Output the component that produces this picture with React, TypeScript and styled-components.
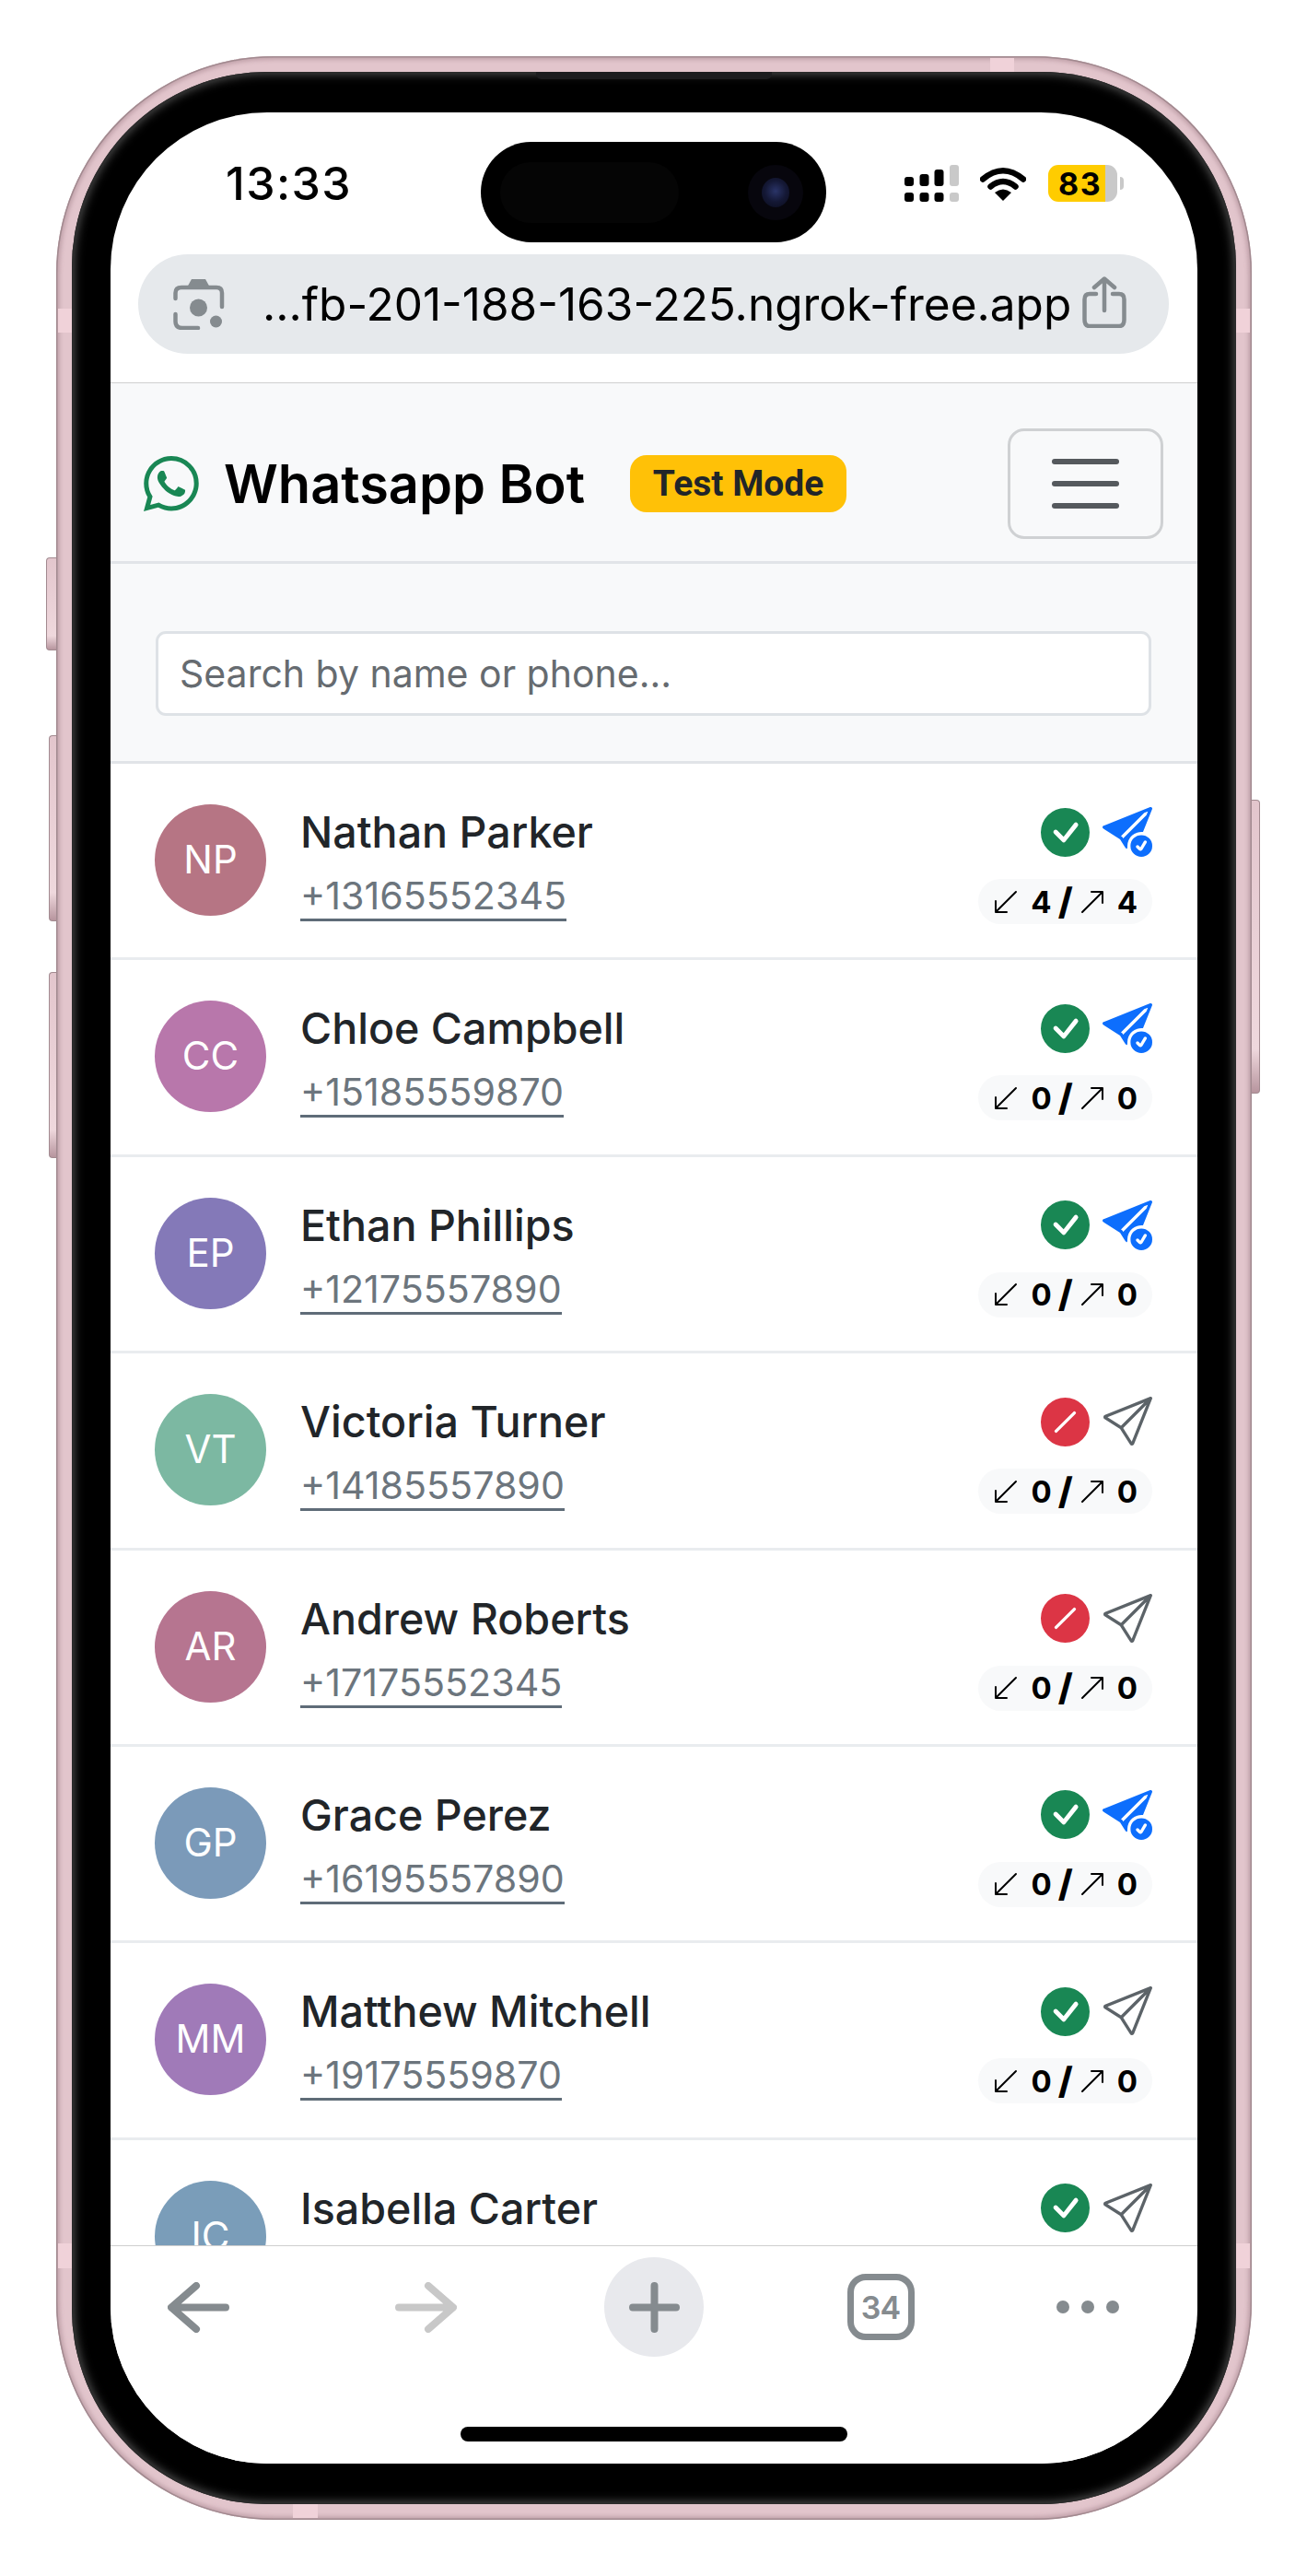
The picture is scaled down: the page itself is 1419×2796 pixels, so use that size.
import styled, { createGlobalStyle } from 'styled-components'
import {
  BsArrowDownLeft,
  BsArrowUpRight,
  BsCheckCircleFill,
  BsSend,
  BsSendCheckFill,
  BsSlashCircleFill,
  BsWhatsapp,
} from 'react-icons/bs'

const GlobalStyle = createGlobalStyle`
  html, body {
    margin: 0;
    background: #fff;
    overflow: hidden;
  }
  * {
    box-sizing: border-box;
  }
`

const Page = styled.div`
  width: 1419px;
  height: 2796px;
  padding: 61px 0 0 61px;
  font-family: Inter, 'Liberation Sans', sans-serif;
`

const Frame = styled.div`
  position: relative;
  width: 1298px;
  height: 2674px;
  padding: 17px;
  border-radius: 236px;
  background: #e2c5cc;
  box-shadow:
    inset 0 0 0 1.5px #a28a90,
    inset 0 0 4px 4px rgba(170, 136, 146, 0.55);
`

const Bezel = styled.div`
  width: 1264px;
  height: 2640px;
  padding: 44px 42px;
  border-radius: 212px;
  background: #000;
  box-shadow:
    inset 0 0 0 1.5px #2b2b2b,
    inset 0 0 11px 2px rgba(110, 110, 110, 0.8);
`

const Screen = styled.div`
  position: relative;
  display: flex;
  flex-direction: column;
  width: 1180px;
  height: 2552px;
  overflow: hidden;
  border-radius: 170px;
  background: #fff;
`

const SideButton = styled.div<{ $right?: boolean; $top: number; $height: number; $width: number }>`
  position: absolute;
  top: ${({ $top }) => $top}px;
  ${({ $right, $width }) => ($right ? 'right' : 'left')}: -${({ $width }) => $width}px;
  width: ${({ $width }) => $width}px;
  height: ${({ $height }) => $height}px;
  border: 1px solid #a28a90;
  border-${({ $right }) => ($right ? 'left' : 'right')}: none;
  border-radius: ${({ $right }) => ($right ? '0 4px 4px 0' : '4px 0 0 4px')};
  background: linear-gradient(180deg, #e3c6cd 0%, #efd8dd 85%, #b7959e 100%);
`

const AntennaBand = styled.div<{ $x: number; $y: number; $w: number; $h: number }>`
  position: absolute;
  left: ${({ $x }) => $x}px;
  top: ${({ $y }) => $y}px;
  width: ${({ $w }) => $w}px;
  height: ${({ $h }) => $h}px;
  background: #f0d2d9;
`

const SpeakerSlit = styled.div`
  position: absolute;
  top: 17px;
  left: 521px;
  width: 256px;
  height: 8px;
  border-radius: 0 0 6px 6px;
  background: #1d1d1f;
`

const Island = styled.div`
  position: absolute;
  top: 32px;
  left: 402px;
  display: flex;
  align-items: center;
  justify-content: space-between;
  width: 375px;
  height: 109px;
  padding: 0 25px 0 21px;
  border-radius: 55px;
  background: #000;
`

const Sensor = styled.div`
  width: 194px;
  height: 66px;
  border-radius: 33px;
  background: #050505;
`

const Camera = styled.div`
  display: flex;
  align-items: center;
  justify-content: center;
  width: 60px;
  height: 60px;
  border-radius: 50%;
  background: #07060d;
`

const Lens = styled.div`
  width: 30px;
  height: 32px;
  border-radius: 50%;
  background: radial-gradient(circle at 50% 45%, #2a3468 0%, #141835 50%, #0a0b1a 100%);
`

const StatusBar = styled.div`
  display: flex;
  flex: 0 0 154px;
  align-items: center;
  padding: 0 87px 0 125px;
`

const Time = styled.div`
  font-size: 50px;
  font-weight: 500;
  letter-spacing: 1.4px;
  color: #000;
`

const StatusIcons = styled.div`
  display: flex;
  align-items: center;
  margin-left: auto;
`

const Battery = styled.div`
  position: relative;
  display: flex;
  align-items: center;
  width: 75px;
  height: 40px;
  margin-left: 24px;
  padding-left: 11px;
  border-radius: 11px;
  background: linear-gradient(90deg, #ffcc00 0 62px, #c9c9c9 62px);
  font-size: 34px;
  font-weight: 700;
  letter-spacing: 1.5px;
  color: #000;
`

const BatteryNub = styled.div`
  position: absolute;
  top: 13px;
  right: -7px;
  width: 4px;
  height: 14px;
  border-radius: 0 4px 4px 0;
  background: #c9c9c9;
`

const AddressRow = styled.div`
  flex: 0 0 139px;
  padding: 0 31px 31px 30px;
`

const AddressBar = styled.div`
  display: flex;
  align-items: center;
  height: 108px;
  padding: 0 46px 0 38px;
  border-radius: 54px;
  background: #e6e9ec;
`

const AddressText = styled.div`
  margin-left: 41px;
  font-size: 49.5px;
  white-space: nowrap;
  color: #000;
`

const ShareSlot = styled.div`
  margin-left: auto;
`

const Navbar = styled.div`
  display: flex;
  flex: 0 0 197px;
  align-items: center;
  padding: 24px 37px 0 36px;
  border-top: 1px solid #cfcfcf;
  border-bottom: 3px solid #e1e4e8;
  background: #f8f9fa;
`

const Logo = styled(BsWhatsapp)`
  width: 60px;
  height: 60px;
  color: #198754;
`

const Brand = styled.div`
  margin-left: 27px;
  font-size: 57.7px;
  font-weight: 600;
  white-space: nowrap;
  color: #000;
`

const TestBadge = styled.div`
  display: flex;
  align-items: center;
  justify-content: center;
  width: 235px;
  height: 62px;
  margin-left: 49px;
  border-radius: 18px;
  background: #ffc107;
  font-family: Roboto, Inter, sans-serif;
  font-size: 39px;
  font-weight: 700;
  color: #212529;
`

const Toggler = styled.div`
  display: flex;
  flex-direction: column;
  align-items: center;
  justify-content: center;
  gap: 18px;
  width: 169px;
  height: 120px;
  margin-left: auto;
  border: 3px solid #cfd1d3;
  border-radius: 18px;
`

const TogglerLine = styled.div`
  width: 73px;
  height: 6px;
  border-radius: 3px;
  background: #55595d;
`

const SearchSection = styled.div`
  flex: 0 0 217px;
  padding: 73px 50px 0 49px;
  border-bottom: 3px solid #e1e4e8;
  background: #f8f9fa;
`

const SearchInput = styled.div`
  display: flex;
  align-items: center;
  height: 92px;
  padding-left: 23px;
  border: 3px solid #dee2e6;
  border-radius: 11px;
  background: #fff;
  font-size: 41px;
  color: #666b70;
`

const ContactList = styled.div`
  flex: 1;
  overflow: hidden;
`

const Row = styled.div`
  display: flex;
  height: 213.4px;
  padding: 44px 49px 0 48px;
  border-bottom: 3px solid #e9ecef;
`

const Avatar = styled.div<{ $color: string }>`
  display: flex;
  flex: 0 0 121px;
  align-items: center;
  justify-content: center;
  height: 121px;
  padding-bottom: 2px;
  border-radius: 50%;
  background: ${({ $color }) => $color};
  font-size: 42px;
  color: #fff;
`

const Info = styled.div`
  display: flex;
  flex-direction: column;
  align-items: flex-start;
  margin-left: 37px;
`

const Name = styled.div`
  margin-top: 2px;
  font-size: 46.6px;
  font-weight: 500;
  line-height: 56px;
  color: #212529;
`

const Phone = styled.div`
  margin-top: 16px;
  border-bottom: 3px solid #5f6c78;
  font-size: 41.2px;
  line-height: 50px;
  color: #6c757d;
`

const Meta = styled.div`
  display: flex;
  flex-direction: column;
  align-items: flex-end;
  margin-left: auto;
`

const MetaIcons = styled.div`
  display: flex;
  align-items: center;
  gap: 14px;
  height: 54px;
  margin-top: 3px;
`

const OkIcon = styled(BsCheckCircleFill)`
  width: 53px;
  height: 53px;
  color: #198754;
`

const BlockedIcon = styled(BsSlashCircleFill)`
  width: 53px;
  height: 53px;
  color: #dc3545;
`

const SentIcon = styled(BsSendCheckFill)`
  width: 54px;
  height: 54px;
  color: #0d6efd;
`

const IdleIcon = styled(BsSend)`
  width: 54px;
  height: 54px;
  color: #5c6368;
`

const Counter = styled.div`
  display: flex;
  align-items: center;
  height: 49px;
  margin-top: 24px;
  padding: 0 16px 0 14px;
  border-radius: 25px;
  background: #f8f9fa;
  font-size: 33px;
  font-weight: 700;
  color: #000;
`

const CounterArrow = styled.span`
  display: flex;
  margin-right: 11px;
  font-size: 32px;
`

const CounterSlash = styled.span`
  margin: 0 5px 0 7px;
  font-size: 40px;
  font-weight: 800;
  line-height: 1;
`

const Toolbar = styled.div`
  display: flex;
  flex: 0 0 237px;
  flex-direction: column;
  align-items: center;
  border-top: 1px solid #cfcfcf;
  background: #fff;
`

const ToolbarItems = styled.div`
  display: grid;
  grid-template-columns: 190px 304px 192px 300px 150px;
  flex: 0 0 132px;
  align-items: center;
  justify-items: center;
  width: 100%;
`

const PlusButton = styled.div`
  display: flex;
  align-items: center;
  justify-content: center;
  width: 108px;
  height: 108px;
  border-radius: 50%;
  background: #e8e9ed;
`

const TabCount = styled.div`
  display: flex;
  align-items: center;
  justify-content: center;
  width: 73px;
  height: 72px;
  border: 7px solid #858b8f;
  border-radius: 20px;
  font-size: 34px;
  font-weight: 600;
  letter-spacing: -1px;
  color: #858b8f;
`

const Dots = styled.div`
  display: flex;
  gap: 13px;
`

const Dot = styled.div`
  width: 14px;
  height: 14px;
  border-radius: 50%;
  background: #858b8f;
`

const HomeBar = styled.div`
  width: 420px;
  height: 16px;
  margin-top: 64px;
  border-radius: 8px;
  background: #000;
`

const SignalIcon = () => (
  <svg width="59" height="40" viewBox="0 0 59 40">
    <rect x="0" y="13" width="10" height="10" rx="3" />
    <rect x="16.5" y="10" width="10" height="13" rx="3" />
    <rect x="32.5" y="5" width="10" height="18" rx="3" />
    <rect x="49" y="0" width="10" height="23" rx="3" fill="#c9c9c9" />
    <rect x="0" y="30" width="10" height="10" rx="3" />
    <rect x="16.5" y="30" width="10" height="10" rx="3" />
    <rect x="32.5" y="30" width="10" height="10" rx="3" />
    <rect x="49" y="30" width="10" height="10" rx="3" fill="#c9c9c9" />
  </svg>
)

const WifiIcon = () => (
  <svg width="50" height="37" viewBox="0 0 50 37" style={{ marginLeft: 23 }}>
    <path d="M3 13.5Q25 -5 47 13.5M11.5 21.5Q25 10.5 38.5 21.5" fill="none" stroke="#000" strokeWidth="6.5" strokeLinecap="round" />
    <path d="M16 28Q25 21 34 28L25 37Z" />
  </svg>
)

const LensIcon = () => (
  <svg width="56" height="55" viewBox="0 0 56 55" fill="none" stroke="#858b8f" strokeWidth="4.5" strokeLinecap="round">
    <path d="M2.5 21V15Q2.5 9 9 9H47Q53 9 53 15V30" />
    <path d="M2.5 38V46Q2.5 53 10 53H27" />
    <path d="M15 9 20 0H35L40 9Z" fill="#858b8f" stroke="none" />
    <circle cx="27.5" cy="31" r="9.5" fill="#858b8f" stroke="none" />
    <circle cx="46.5" cy="46" r="6.5" fill="#858b8f" stroke="none" />
  </svg>
)

const ShareIcon = () => (
  <svg width="48" height="56" viewBox="0 0 48 56" fill="none" stroke="#858b8f" strokeWidth="4.5" strokeLinecap="round" strokeLinejoin="round">
    <path d="M15 19H8Q2.5 19 2.5 25V47Q2.5 54 8 54H40Q45.5 54 45.5 47V25Q45.5 19 40 19H33" />
    <path d="M24 37V3M13 12 24 2.5 35 12" />
  </svg>
)

const ArrowIcon = ({ forward }: { forward?: boolean }) => (
  <svg width="67" height="55" viewBox="0 0 67 55" fill="none" stroke={forward ? '#c8c8c8' : '#858b8f'} strokeWidth="8" strokeLinecap="round" strokeLinejoin="round">
    {forward ? <path d="M4 27.5H62M36 4 63 27.5 36 51" /> : <path d="M63 27.5H5M31 4 4 27.5 31 51" />}
  </svg>
)

const PlusIcon = () => (
  <svg width="55" height="55" viewBox="0 0 55 55" fill="none" stroke="#858b8f" strokeWidth="8" strokeLinecap="round">
    <path d="M27.5 4V51M4 27.5H51" />
  </svg>
)

interface Contact {
  initials: string
  name: string
  phone?: string
  color: string
  active: boolean
  sent: boolean
  received?: number
  replied?: number
}

const contacts: Contact[] = [
  { initials: 'NP', name: 'Nathan Parker', phone: '+13165552345', color: '#b67584', active: true, sent: true, received: 4, replied: 4 },
  { initials: 'CC', name: 'Chloe Campbell', phone: '+15185559870', color: '#b877ab', active: true, sent: true, received: 0, replied: 0 },
  { initials: 'EP', name: 'Ethan Phillips', phone: '+12175557890', color: '#8479b8', active: true, sent: true, received: 0, replied: 0 },
  { initials: 'VT', name: 'Victoria Turner', phone: '+14185557890', color: '#7cb8a2', active: false, sent: false, received: 0, replied: 0 },
  { initials: 'AR', name: 'Andrew Roberts', phone: '+17175552345', color: '#b67590', active: false, sent: false, received: 0, replied: 0 },
  { initials: 'GP', name: 'Grace Perez', phone: '+16195557890', color: '#7b9ab9', active: true, sent: true, received: 0, replied: 0 },
  { initials: 'MM', name: 'Matthew Mitchell', phone: '+19175559870', color: '#a07ab8', active: true, sent: false, received: 0, replied: 0 },
  { initials: 'IC', name: 'Isabella Carter', color: '#7a9db9', active: true, sent: false },
]

const ContactRow = ({ contact }: { contact: Contact }) => (
  <Row>
    <Avatar $color={contact.color}>{contact.initials}</Avatar>
    <Info>
      <Name>{contact.name}</Name>
      {contact.phone && <Phone>{contact.phone}</Phone>}
    </Info>
    <Meta>
      <MetaIcons>
        {contact.active ? <OkIcon /> : <BlockedIcon />}
        {contact.sent ? <SentIcon /> : <IdleIcon />}
      </MetaIcons>
      {contact.received !== undefined && (
        <Counter>
          <CounterArrow>
            <BsArrowDownLeft />
          </CounterArrow>
          {contact.received}
          <CounterSlash>/</CounterSlash>
          <CounterArrow>
            <BsArrowUpRight />
          </CounterArrow>
          {contact.replied}
        </Counter>
      )}
    </Meta>
  </Row>
)

export default function App() {
  return (
    <>
      <GlobalStyle />
      <Page>
        <Frame>
          <SideButton $top={544} $height={101} $width={11} />
          <SideButton $top={737} $height={202} $width={8} />
          <SideButton $top={994} $height={202} $width={8} />
          <SideButton $right $top={807} $height={319} $width={9} />
          <AntennaBand $x={1014} $y={2} $w={26} $h={15} />
          <AntennaBand $x={2} $y={274} $w={15} $h={26} />
          <AntennaBand $x={1281} $y={274} $w={15} $h={26} />
          <AntennaBand $x={257} $y={2657} $w={27} $h={15} />
          <AntennaBand $x={2} $y={2374} $w={15} $h={27} />
          <AntennaBand $x={1281} $y={2374} $w={15} $h={27} />
          <SpeakerSlit />
          <Bezel>
            <Screen>
              <Island>
                <Sensor />
                <Camera>
                  <Lens />
                </Camera>
              </Island>
              <StatusBar>
                <Time>13:33</Time>
                <StatusIcons>
                  <SignalIcon />
                  <WifiIcon />
                  <Battery>
                    83
                    <BatteryNub />
                  </Battery>
                </StatusIcons>
              </StatusBar>
              <AddressRow>
                <AddressBar>
                  <LensIcon />
                  <AddressText>...fb-201-188-163-225.ngrok-free.app</AddressText>
                  <ShareSlot>
                    <ShareIcon />
                  </ShareSlot>
                </AddressBar>
              </AddressRow>
              <Navbar>
                <Logo />
                <Brand>Whatsapp Bot</Brand>
                <TestBadge>Test Mode</TestBadge>
                <Toggler>
                  <TogglerLine />
                  <TogglerLine />
                  <TogglerLine />
                </Toggler>
              </Navbar>
              <SearchSection>
                <SearchInput>Search by name or phone...</SearchInput>
              </SearchSection>
              <ContactList>
                {contacts.map((contact) => (
                  <ContactRow key={contact.initials} contact={contact} />
                ))}
              </ContactList>
              <Toolbar>
                <ToolbarItems>
                  <ArrowIcon />
                  <ArrowIcon forward />
                  <PlusButton>
                    <PlusIcon />
                  </PlusButton>
                  <TabCount>34</TabCount>
                  <Dots>
                    <Dot />
                    <Dot />
                    <Dot />
                  </Dots>
                </ToolbarItems>
                <HomeBar />
              </Toolbar>
            </Screen>
          </Bezel>
        </Frame>
      </Page>
    </>
  )
}
